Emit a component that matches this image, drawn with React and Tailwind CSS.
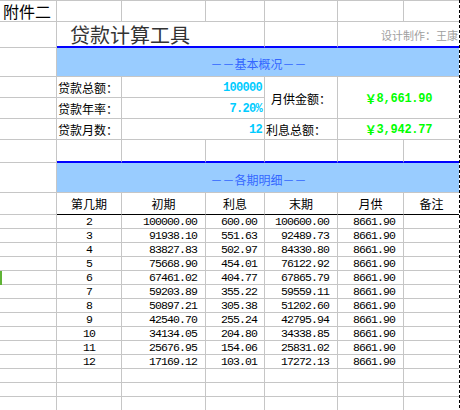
import React from "react";

const rows = [
  ["2", "100000.00", "600.00", "100600.00", "8661.90"],
  ["3", "91938.10", "551.63", "92489.73", "8661.90"],
  ["4", "83827.83", "502.97", "84330.80", "8661.90"],
  ["5", "75668.90", "454.01", "76122.92", "8661.90"],
  ["6", "67461.02", "404.77", "67865.79", "8661.90"],
  ["7", "59203.89", "355.22", "59559.11", "8661.90"],
  ["8", "50897.21", "305.38", "51202.60", "8661.90"],
  ["9", "42540.70", "255.24", "42795.94", "8661.90"],
  ["10", "34134.05", "204.80", "34338.85", "8661.90"],
  ["11", "25676.95", "154.06", "25831.02", "8661.90"],
  ["12", "17169.12", "103.01", "17272.13", "8661.90"],
  ["", "", "", "", ""],
  ["", "", "", "", ""],
  ["", "", "", "", ""],
];

const g = "border-r border-b border-[#c6c6c6]";
const cjk = "font-['Noto_Sans_CJK_SC',sans-serif]";
const mono = "font-['Liberation_Mono','Noto_Sans_CJK_SC',monospace]";

export default function App() {
  return (
    <div className="relative w-[460px] h-[410px] overflow-hidden bg-white text-black">
      <div className="grid grid-cols-[57px_65px_84px_59px_73px_66px_56px] grid-rows-[22px_26px_29px_21px_21px_21px_23px_30px_22px_repeat(14,14px)]">
        {/* Row 1 */}
        <div className={`${g} border-t flex items-center pl-[3px] text-[16px] leading-none ${cjk}`}>附件二</div>
        <div className={`${g} border-t`} />
        <div className={`${g} border-t`} />
        <div className={`${g} border-t`} />
        <div className={`${g} border-t`} />
        <div className={`${g} border-t`} />
        <div className={`${g} border-t`} />

        {/* Row 2 */}
        <div className={g} />
        <div className={`col-span-3 border-r border-[#c6c6c6] border-b-2 border-b-[#0000ff] flex items-end pl-[13px] pb-[1px] text-[20px] leading-none text-[#333] ${cjk}`}>
          贷款计算工具
        </div>
        <div className="border-r border-[#c6c6c6] border-b-2 border-b-[#0000ff]" />
        <div className={`col-span-2 border-r border-[#c6c6c6] border-b-2 border-b-[#0000ff] flex items-end justify-end pb-[5px] pr-[1px] text-[11px] leading-none text-[#a0a0a0] whitespace-nowrap ${cjk}`}>
          设计制作：王康
        </div>

        {/* Row 3 */}
        <div className={g} />
        <div className={`col-span-6 bg-[#99ccff] border-b border-[#c6c6c6] flex items-center justify-center pt-[4px] text-[12px] leading-none text-[#3366ff] ${cjk}`}>
          －－基本概况－－
        </div>

        {/* Row 4 */}
        <div className={g} />
        <div className={`${g} flex items-center pl-[1px] pt-[1px] text-[12px] leading-none whitespace-nowrap ${cjk}`}>贷款总额：</div>
        <div className={`${g} col-span-2 flex items-center justify-end pr-[2px] pt-[1px] text-[12px] leading-none font-bold tracking-[-0.7px] text-[#00ccff] ${mono}`}>100000</div>
        <div className={`${g} row-span-2 flex items-center justify-center pt-[2px] text-[12px] leading-none whitespace-nowrap ${cjk}`}>月供金额：</div>
        <div className={`${g} col-span-2 row-span-2 flex items-center justify-center pt-[3px] text-[12px] leading-none font-bold tracking-[-0.25px] text-[#00ff00] ${mono}`}>
          <span className={cjk}>￥</span>8,661.90
        </div>

        {/* Row 5 */}
        <div className={g} />
        <div className={`${g} flex items-center pl-[1px] pt-[1px] text-[12px] leading-none whitespace-nowrap ${cjk}`}>贷款年率：</div>
        <div className={`${g} col-span-2 flex items-center justify-end pr-[2px] pt-[1px] text-[12px] leading-none font-bold tracking-[-0.7px] text-[#00ccff] ${mono}`}>7.20%</div>

        {/* Row 6 */}
        <div className={g} />
        <div className={`${g} flex items-center pl-[1px] pt-[1px] text-[12px] leading-none whitespace-nowrap ${cjk}`}>贷款月数：</div>
        <div className={`${g} col-span-2 flex items-center justify-end pr-[2px] pt-[1px] text-[12px] leading-none font-bold tracking-[-0.7px] text-[#00ccff] ${mono}`}>12</div>
        <div className={`${g} flex items-center pl-[1px] pt-[1px] text-[12px] leading-none whitespace-nowrap ${cjk}`}>利息总额：</div>
        <div className={`${g} col-span-2 flex items-center justify-center pt-[1px] text-[12px] leading-none font-bold tracking-[-0.25px] text-[#00ff00] ${mono}`}>
          <span className={cjk}>￥</span>3,942.77
        </div>

        {/* Row 7 */}
        <div className={g} />
        <div className="border-r border-[#c6c6c6] border-b-2 border-b-[#0000ff]" />
        <div className="border-r border-[#c6c6c6] border-b-2 border-b-[#0000ff]" />
        <div className="border-r border-[#c6c6c6] border-b-2 border-b-[#0000ff]" />
        <div className="border-r border-[#c6c6c6] border-b-2 border-b-[#0000ff]" />
        <div className="border-r border-[#c6c6c6] border-b-2 border-b-[#0000ff]" />
        <div className="border-r border-[#c6c6c6] border-b-2 border-b-[#0000ff]" />

        {/* Row 8 */}
        <div className={g} />
        <div className={`col-span-6 bg-[#99ccff] border-b border-[#c6c6c6] flex items-center justify-center pt-[4px] text-[12px] leading-none text-[#3366ff] ${cjk}`}>
          －－各期明细－－
        </div>

        {/* Row 9 header */}
        <div className={g} />
        {["第几期", "初期", "利息", "末期", "月供", "备注"].map((h) => (
          <div key={h} className={`border-r border-[#c6c6c6] border-b border-b-black flex items-center justify-center pt-[1px] text-[12px] leading-none ${cjk}`}>
            {h}
          </div>
        ))}

        {/* Data rows */}
        {rows.map((r, i) => (
          <React.Fragment key={i}>
            <div className={g} />
            <div className={`${g} flex items-center justify-center pt-[1px] text-[11.5px] leading-none tracking-[-0.9px] ${mono}`}>{r[0]}</div>
            <div className={`${g} flex items-center justify-end pr-[8px] pt-[1px] text-[11.5px] leading-none tracking-[-0.9px] ${mono}`}>{r[1]}</div>
            <div className={`${g} flex items-center justify-end pr-[7px] pt-[1px] text-[11.5px] leading-none tracking-[-0.9px] ${mono}`}>{r[2]}</div>
            <div className={`${g} flex items-center justify-end pr-[8px] pt-[1px] text-[11.5px] leading-none tracking-[-0.9px] ${mono}`}>{r[3]}</div>
            <div className={`${g} flex items-center justify-end pr-[8px] pt-[1px] text-[11.5px] leading-none tracking-[-0.9px] ${mono}`}>{r[4]}</div>
            <div className={g} />
          </React.Fragment>
        ))}
      </div>

      {/* page-break dashed line */}
      <div className="absolute top-0 bottom-0 left-[459px] w-px bg-[repeating-linear-gradient(to_bottom,#000_0_3px,#fff_3px_5px)]" />
      {/* row selection marker */}
      <div className="absolute left-0 top-[271px] w-[2px] h-[14px] bg-[#5fb336]" />
    </div>
  );
}
